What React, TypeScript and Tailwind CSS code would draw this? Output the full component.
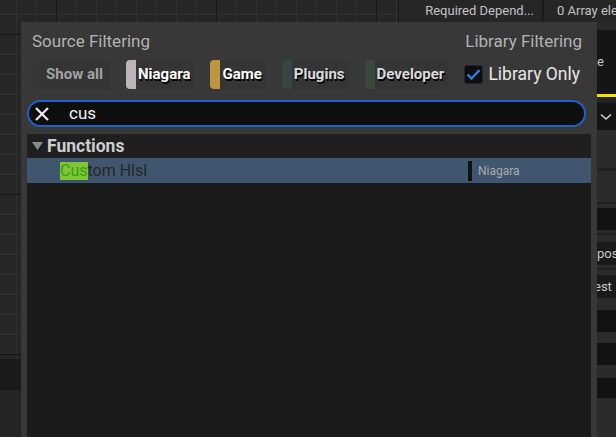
import React from "react";

type Chip = { label: string; swatch?: string; text: string };

const chips: Chip[] = [
  { label: "Niagara", swatch: "bg-[#bdb5b5]", text: "text-white" },
  { label: "Game", swatch: "bg-[#c1953f]", text: "text-white" },
  { label: "Plugins", swatch: "bg-[#364443]", text: "text-[#dadada]" },
  { label: "Developer", swatch: "bg-[#394a3c]", text: "text-[#dadada]" },
];

// rows of the details panel that peek out to the right of the popup
const sliver: { h: string; bg: string; text?: string }[] = [
  { h: "h-[8px]", bg: "bg-[#2a2a2a]" },
  { h: "h-[64px]", bg: "bg-[#151515]", text: "e" },
  { h: "h-[3px]", bg: "bg-[#f0e300]" },
  { h: "h-[6px]", bg: "bg-[#232323]" },
  { h: "h-[27px]", bg: "bg-[#141414]", text: "chevron" },
  { h: "h-[38px]", bg: "bg-[#2b2b2b]" },
  { h: "h-[3px]", bg: "bg-[#1f1f1f]" },
  { h: "h-[31px]", bg: "bg-[#2b2b2b]" },
  { h: "h-[2px]", bg: "bg-[#1f1f1f]" },
  { h: "h-[4px]", bg: "bg-[#2b2b2b]" },
  { h: "h-[22px]", bg: "bg-[#121212]" },
  { h: "h-[3px]", bg: "bg-[#2b2b2b]" },
  { h: "h-[2px]", bg: "bg-[#1f1f1f]" },
  { h: "h-[7px]", bg: "bg-[#2b2b2b]" },
  { h: "h-[23px]", bg: "bg-[#1a1a1a]", text: "pos" },
  { h: "h-[3px]", bg: "bg-[#2b2b2b]" },
  { h: "h-[2px]", bg: "bg-[#1f1f1f]" },
  { h: "h-[5px]", bg: "bg-[#2b2b2b]" },
  { h: "h-[23px]", bg: "bg-[#1a1a1a]", text: "est" },
  { h: "h-[12px]", bg: "bg-[#2b2b2b]" },
  { h: "h-[22px]", bg: "bg-[#121212]" },
  { h: "h-[11px]", bg: "bg-[#2b2b2b]" },
  { h: "h-[22px]", bg: "bg-[#121212]" },
  { h: "h-[13px]", bg: "bg-[#2b2b2b]" },
  { h: "h-[20px]", bg: "bg-[#121212]" },
];

const App = () => {
  return (
    <div className="relative w-[616px] h-[437px] overflow-hidden bg-[#262626] font-['Roboto',sans-serif]">
      <div className="flex h-full">
        {/* graph canvas */}
        <div className="w-[398px] flex flex-col">
          <div className="h-[359px] bg-[#262626] [background-image:linear-gradient(to_right,#161616_1px,transparent_1px),linear-gradient(to_bottom,#161616_1px,transparent_1px),linear-gradient(to_right,#303030_1px,transparent_1px),linear-gradient(to_bottom,#303030_1px,transparent_1px)] [background-size:160px_160px,160px_160px,20px_20px,20px_20px] [background-position:56px_34px,56px_34px,16px_14px,16px_14px]" />
          <div className="h-[31px] bg-[#1a1a1a]" />
          <div className="flex-1 bg-[#242424]" />
        </div>

        {/* details panel */}
        <div className="w-[218px] flex flex-col border-l border-[#1a1a1a]">
          <div className="h-[22px] flex bg-[#262626] text-[13px] text-[#c2c2c2] leading-[22px]">
            <div className="w-[143px] pr-[8px] text-right whitespace-nowrap">Required Depend...</div>
            <div className="w-[2px] bg-[#1a1a1a]" />
            <div className="flex-1 pl-[13px] whitespace-nowrap overflow-hidden">0 Array elements</div>
          </div>
          <div className="flex flex-1">
            <div className="w-[198px] bg-[#1c1c1c]" />
            <div className="w-[19px] flex flex-col overflow-hidden">
              {sliver.map((r, i) => (
                <div key={i} className={`${r.h} ${r.bg} flex items-center text-[13px] text-[#c8c8c8] whitespace-nowrap`}>
                  {r.text === "chevron" ? (
                    <svg width="12" height="8" viewBox="0 0 12 8" className="ml-[3px]">
                      <path d="M1 1.5 L6 6 L11 1.5" stroke="#d0d0d0" strokeWidth="1.6" fill="none" />
                    </svg>
                  ) : r.text === "est" ? (
                    <span className="-ml-[3px]">est</span>
                  ) : (
                    r.text && <span>{r.text}</span>
                  )}
                </div>
              ))}
              <div className="flex-1 bg-[#2b2b2b]" />
            </div>
          </div>
        </div>
      </div>

      {/* action menu popup */}
      <div className="absolute left-[21px] top-[22px] w-[576px] bottom-0 bg-[#383838] flex flex-col">
        <div className="h-[18px] mt-[10px] pl-[11px] pr-[15px] flex justify-between text-[17px] leading-[18px] text-[#b2b2b2]">
          <span>Source Filtering</span>
          <span>Library Filtering</span>
        </div>

        <div className="mt-[10px] h-[29px] pl-[18px] flex items-center">
          <div className="h-full w-[71px] flex items-center justify-center rounded-[4px] bg-[#353535] text-[15px] font-bold text-[#a3a3a3]">
            Show all
          </div>
          {chips.map((c) => (
            <div key={c.label} className="ml-[16px] h-full flex items-center rounded-[4px] bg-[#353535] pr-[4px]">
              <div className={`w-[10px] h-full rounded-l-[4px] ${c.swatch}`} />
              <span className={`pl-[2px] text-[15px] font-bold ${c.text} [text-shadow:1px_2px_0_#000]`}>{c.label}</span>
            </div>
          ))}
          <div className="ml-auto mr-[17px] flex items-center">
            <div className="w-[19px] h-[19px] rounded-[3px] bg-[#0d0d0d] border border-[#252525] flex items-center justify-center">
              <svg width="15" height="13" viewBox="0 0 15 13">
                <path d="M1.5 6.5 L5.5 10.5 L13.5 2" stroke="#2a80e4" strokeWidth="2.4" fill="none" />
              </svg>
            </div>
            <span className="ml-[5px] text-[17.5px] text-[#e6e6e6]">Library Only</span>
          </div>
        </div>

        <div className="mt-[11px] ml-[6px] mr-[11px] h-[27px] rounded-full border-2 border-[#1b63c6] bg-[#0e0e0e] flex items-center">
          <svg width="16" height="16" viewBox="0 0 16 16" className="ml-[5px]">
            <path d="M2 2 L14 14 M14 2 L2 14" stroke="#ececec" strokeWidth="2.2" />
          </svg>
          <span className="ml-[19px] text-[17px] text-[#f0f0f0]">cus</span>
        </div>

        <div className="mt-[7px] ml-[6px] mr-[6px] flex-1 bg-[#1b1b1b] flex flex-col">
          <div className="h-[24px] bg-[#1f1f1f] flex items-center">
            <svg width="11" height="8" viewBox="0 0 11 8" className="ml-[5px]">
              <path d="M0 0 L11 0 L5.5 8 Z" fill="#8a8a8a" />
            </svg>
            <span className="ml-[4px] text-[17.5px] font-bold text-[#cdcdcd]">Functions</span>
          </div>
          <div className="h-[25px] bg-[#40566e] flex items-center">
            <div className="flex-1 pl-[33px] text-[16px] text-[#262626] flex items-center">
              <span className="bg-[#7fc636] text-[#35a013] leading-[18px]">Cus</span>
              <span>tom Hlsl</span>
            </div>
            <div className="w-[123px] flex items-center">
              <div className="w-[4px] h-[20px] bg-[#111111]" />
              <span className="ml-[6px] text-[12px] text-[#a7abb0]">Niagara</span>
            </div>
          </div>
        </div>
      </div>
    </div>
  );
};

export default App;
